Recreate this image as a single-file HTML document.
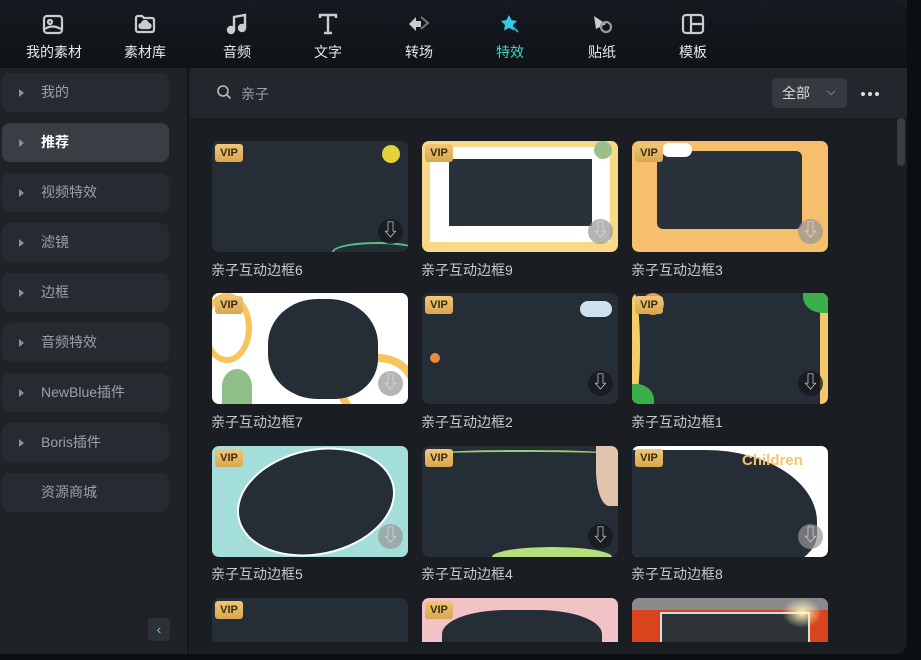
<!DOCTYPE html>
<html><head><meta charset="utf-8"><style>
*{margin:0;padding:0;box-sizing:border-box}
body{width:921px;height:660px;background:#0c0f12;overflow:hidden;position:relative;font-family:"Liberation Sans","Noto Sans CJK SC",sans-serif}
.win{position:absolute;left:0;top:0;width:907px;height:654px;background:#1a1d21;border-radius:0 0 12px 0;overflow:hidden}
.top{position:absolute;left:0;top:0;width:907px;height:68px;background:linear-gradient(#151a20,#0f1318);border-top-right-radius:12px}
.tab{position:absolute;top:0;width:80px;text-align:center;color:#e6e8ea;font-size:14px}
.tab svg{position:absolute;top:12px;left:28px}
.tab span{position:absolute;top:42px;left:0;width:80px}
.side{position:absolute;left:0;top:68px;width:188px;height:586px;background:#1f2328;border-right:1px solid #111}
.item{position:absolute;left:2px;width:167px;height:39px;border-radius:8px;background:#272b31;color:#9aa0a6;font-size:14px;line-height:39px;padding-left:39px}
.item.sel{background:#393e45;color:#fff;font-weight:bold}
.item i{position:absolute;left:17px;top:16px;width:0;height:0;border-left:5px solid #8a9097;border-top:4px solid transparent;border-bottom:4px solid transparent}
.search{position:absolute;left:190px;top:68px;width:717px;height:50px;background:#23272d}
.card{position:absolute;width:196px;height:111px;border-radius:7px;overflow:hidden;background:#252d36}
.vip{position:absolute;left:3px;top:3px;width:28px;height:18px;border-radius:3px;background:linear-gradient(#f0c878,#d9a64f);color:#3a2a10;font-size:11px;font-weight:bold;line-height:18px;text-align:center}
.dl{position:absolute;right:5px;bottom:8px;width:25px;height:25px;border-radius:50%;background:rgba(20,24,28,.75)}
.dl.g{background:rgba(150,150,150,.7)}
.dl:after{content:"⇩";position:absolute;left:0;top:0;width:25px;text-align:center;color:#ddd;font-size:17px;line-height:24px}
.lbl{position:absolute;color:#c9cdd2;font-size:14px}
</style></head><body>
<div class="win">
<div class="top">
 <div class="tab" style="left:14px"><svg width="24" height="24" viewBox="0 0 24 24" fill="none" stroke="#ccc" stroke-width="2.2"><rect x="2" y="4" width="18" height="17" rx="3"/><circle cx="8" cy="10" r="2"/><path d="M3 17 Q10 12 19 17"/></svg><span>我的素材</span></div>
 <div class="tab" style="left:105px"><svg width="24" height="24" viewBox="0 0 24 24" fill="none" stroke="#ccc" stroke-width="2.2"><path d="M3 6a2 2 0 0 1 2-2h4l2 2h8a2 2 0 0 1 2 2v10a2 2 0 0 1-2 2H5a2 2 0 0 1-2-2z"/><path d="M8 16h8a2 2 0 0 0-1-4 3 3 0 0 0-6 0 2 2 0 0 0-1 4z" fill="#ccc"/></svg><span>素材库</span></div>
 <div class="tab" style="left:197px"><svg width="24" height="24" viewBox="0 0 24 24" fill="none" stroke="#ccc" stroke-width="2.4"><path d="M9 18V5l11-2v13"/><circle cx="6" cy="18" r="3" fill="#ccc"/><circle cx="17" cy="16" r="3" fill="#ccc"/></svg><span>音频</span></div>
 <div class="tab" style="left:288px"><svg width="24" height="24" viewBox="0 0 24 24" fill="none" stroke="#ccc" stroke-width="2.4"><path d="M4 6V3h16v3M12 3v18M8 21h8"/></svg><span>文字</span></div>
 <div class="tab" style="left:379px"><svg width="24" height="24" viewBox="0 0 24 24"><path d="M2 12l7-7v4h5v6H9v4z" fill="#ccc"/><path d="M14 5l7 6-7 6" fill="none" stroke="#777" stroke-width="2"/></svg><span>转场</span></div>
 <div class="tab" style="left:470px;color:#3fd6c4"><svg width="24" height="24" viewBox="0 0 24 24"><path d="M11 3l2.5 5 5.5 1-4 4 1 5.5-5-2.6-5 2.6 1-5.5-4-4 5.5-1z" fill="#35c8e8"/><path d="M15 15l5 5" stroke="#2aa" stroke-width="2"/></svg><span>特效</span></div>
 <div class="tab" style="left:562px"><svg width="24" height="24" viewBox="0 0 24 24"><path d="M4 4l12 8-10 5z" fill="#ccc"/><circle cx="16" cy="15" r="5" fill="none" stroke="#999" stroke-width="2.2"/></svg><span>贴纸</span></div>
 <div class="tab" style="left:653px"><svg width="24" height="24" viewBox="0 0 24 24" fill="none" stroke="#ccc" stroke-width="2.2"><rect x="2" y="3" width="20" height="18" rx="3"/><path d="M10 3v18M10 12h12"/></svg><span>模板</span></div>
</div>
<div class="side">
 <div class="item" style="top:5px"><i></i>我的</div>
 <div class="item sel" style="top:55px"><i></i>推荐</div>
 <div class="item" style="top:105px"><i></i>视频特效</div>
 <div class="item" style="top:155px"><i></i>滤镜</div>
 <div class="item" style="top:205px"><i></i>边框</div>
 <div class="item" style="top:255px"><i></i>音频特效</div>
 <div class="item" style="top:305px"><i></i>NewBlue插件</div>
 <div class="item" style="top:355px"><i></i>Boris插件</div>
 <div class="item" style="top:405px">资源商城</div>
 <div style="position:absolute;left:148px;top:550px;width:22px;height:23px;border-radius:4px;background:#2c3137;color:#3fd6c4;text-align:center;line-height:22px;font-size:14px">‹</div>
</div>
<div class="search">
 <svg style="position:absolute;left:26px;top:16px" width="16" height="16" viewBox="0 0 16 16" fill="none" stroke="#bbb" stroke-width="1.6"><circle cx="7" cy="7" r="5"/><path d="M11 11l3.5 3.5"/></svg>
 <span style="position:absolute;left:51px;top:16px;color:#9aa0a6;font-size:14px">亲子</span>
 <div style="position:absolute;left:582px;top:10px;width:75px;height:30px;border-radius:5px;background:#353a41;color:#ddd;font-size:14px;line-height:30px;padding-left:10px">全部<span style="position:absolute;left:55px;top:-1px;font-size:11px;color:#ccc">⌵</span></div>
 <div style="position:absolute;left:671px;top:24px;width:20px;height:4px">
  <i style="position:absolute;left:0;width:4px;height:4px;border-radius:50%;background:#ddd"></i><i style="position:absolute;left:7px;width:4px;height:4px;border-radius:50%;background:#ddd"></i><i style="position:absolute;left:14px;width:4px;height:4px;border-radius:50%;background:#ddd"></i></div>
</div>
<div style="position:absolute;left:897px;top:118px;width:8px;height:48px;border-radius:4px;background:#3a3f45"></div>

<!-- row 1 -->
<div class="card" style="left:212px;top:141px"><div style="position:absolute;right:8px;top:4px;width:18px;height:18px;border-radius:50%;background:#e4d23a"></div><div style="position:absolute;left:120px;bottom:-10px;width:90px;height:20px;border:2px solid #5ac08a;border-radius:50%"></div><div class="vip">VIP</div><div class="dl"></div></div>
<div class="card" style="left:422px;top:141px;background:#f8d98a"><div style="position:absolute;left:8px;top:6px;right:8px;bottom:10px;background:#fff"></div><div style="position:absolute;left:27px;top:18px;width:143px;height:67px;background:#29313a"></div><div style="position:absolute;right:6px;top:0;width:18px;height:18px;border-radius:50%;background:#9bbf88"></div><div class="vip">VIP</div><div class="dl g"></div></div>
<div class="card" style="left:632px;top:141px;background:#f6bf6e"><div style="position:absolute;left:25px;top:10px;width:145px;height:78px;background:#29313a;border-radius:6px"></div><div style="position:absolute;left:30px;top:2px;width:30px;height:14px;background:#fff;border-radius:8px"></div><div class="vip">VIP</div><div class="dl g"></div></div>
<div class="lbl" style="left:211px;top:260px">亲子互动边框6</div>
<div class="lbl" style="left:421px;top:260px">亲子互动边框9</div>
<div class="lbl" style="left:631px;top:260px">亲子互动边框3</div>
<!-- row 2 -->
<div class="card" style="left:212px;top:293px;background:#fff"><div style="position:absolute;left:0;top:0;width:50px;height:70px;border:6px solid #f8c45e;border-radius:50%;left:-10px"></div><div style="position:absolute;right:-10px;bottom:-20px;width:80px;height:70px;border:8px solid #f8c45e;border-radius:50%"></div><div style="position:absolute;left:56px;top:6px;width:110px;height:100px;background:#252d36;border-radius:45% 45% 40% 45%"></div><div style="position:absolute;left:10px;bottom:0;width:30px;height:35px;background:#8dbf86;border-radius:50% 50% 0 0"></div><div class="vip">VIP</div><div class="dl g"></div></div>
<div class="card" style="left:422px;top:293px"><div style="position:absolute;right:6px;top:8px;width:32px;height:16px;background:#cfe0f0;border-radius:10px"></div><div style="position:absolute;left:8px;top:60px;width:10px;height:10px;background:#e88a3a;border-radius:50%"></div><div class="vip">VIP</div><div class="dl"></div></div>
<div class="card" style="left:632px;top:293px"><div style="position:absolute;left:-4px;top:0;width:12px;height:111px;background:#f2cf66;border-radius:0 50% 50% 0"></div><div style="position:absolute;right:-4px;top:0;width:12px;height:111px;background:#f4c86a"></div><div style="position:absolute;left:10px;top:0;width:22px;height:22px;background:#f09550;border-radius:50%"></div><div style="position:absolute;right:0;top:0;width:25px;height:20px;background:#3bb04a;border-radius:0 0 0 80%"></div><div style="position:absolute;left:0;bottom:0;width:22px;height:20px;background:#3bb04a;border-radius:0 80% 0 0"></div><div class="vip">VIP</div><div class="dl"></div></div>
<div class="lbl" style="left:211px;top:412px">亲子互动边框7</div>
<div class="lbl" style="left:421px;top:412px">亲子互动边框2</div>
<div class="lbl" style="left:631px;top:412px">亲子互动边框1</div>
<!-- row 3 -->
<div class="card" style="left:212px;top:446px;background:#a3dedb"><div style="position:absolute;left:24px;top:3px;width:160px;height:106px;background:#252d36;border:2px solid #fff;border-radius:50%;transform:rotate(-12deg)"></div><div class="vip">VIP</div><div class="dl g"></div></div>
<div class="card" style="left:422px;top:446px"><div style="position:absolute;left:10px;top:4px;width:180px;height:8px;border-top:2px solid #9ad06a;border-radius:50%"></div><div style="position:absolute;right:0;top:0;width:22px;height:60px;background:#e2c3ad;border-radius:0 0 0 60%"></div><div style="position:absolute;left:70px;bottom:-10px;width:120px;height:20px;background:#b6de7c;border-radius:50%"></div><div class="vip">VIP</div><div class="dl"></div></div>
<div class="card" style="left:632px;top:446px;background:#fff"><div style="position:absolute;left:0;top:4px;width:185px;height:120px;background:#252d36;border-radius:0 60% 30% 0"></div><div style="position:absolute;left:110px;top:6px;color:#f5c56c;font-weight:bold;font-size:15px">Children</div><div class="vip">VIP</div><div class="dl g"></div></div>
<div class="lbl" style="left:211px;top:564px">亲子互动边框5</div>
<div class="lbl" style="left:421px;top:564px">亲子互动边框4</div>
<div class="lbl" style="left:631px;top:564px">亲子互动边框8</div>
<!-- row 4 -->
<div class="card" style="left:212px;top:598px;height:44px;border-radius:7px 7px 0 0"><div class="vip">VIP</div></div>
<div class="card" style="left:422px;top:598px;height:44px;border-radius:7px 7px 0 0;background:#f3c2c6"><div style="position:absolute;left:20px;top:12px;width:160px;height:60px;background:#252d36;border-radius:40%"></div><div class="vip">VIP</div></div>
<div class="card" style="left:632px;top:598px;height:44px;border-radius:7px 7px 0 0;background:#d9441e"><div style="position:absolute;left:0;top:0;width:196px;height:12px;background:#8a8a8a"></div><div style="position:absolute;left:28px;top:14px;width:150px;height:40px;background:#2d3336;border:2px solid #ddd"></div><div style="position:absolute;left:150px;top:0;width:40px;height:30px;background:radial-gradient(#fff6c0,rgba(255,200,80,0) 70%)"></div></div>
</div>
</body></html>
